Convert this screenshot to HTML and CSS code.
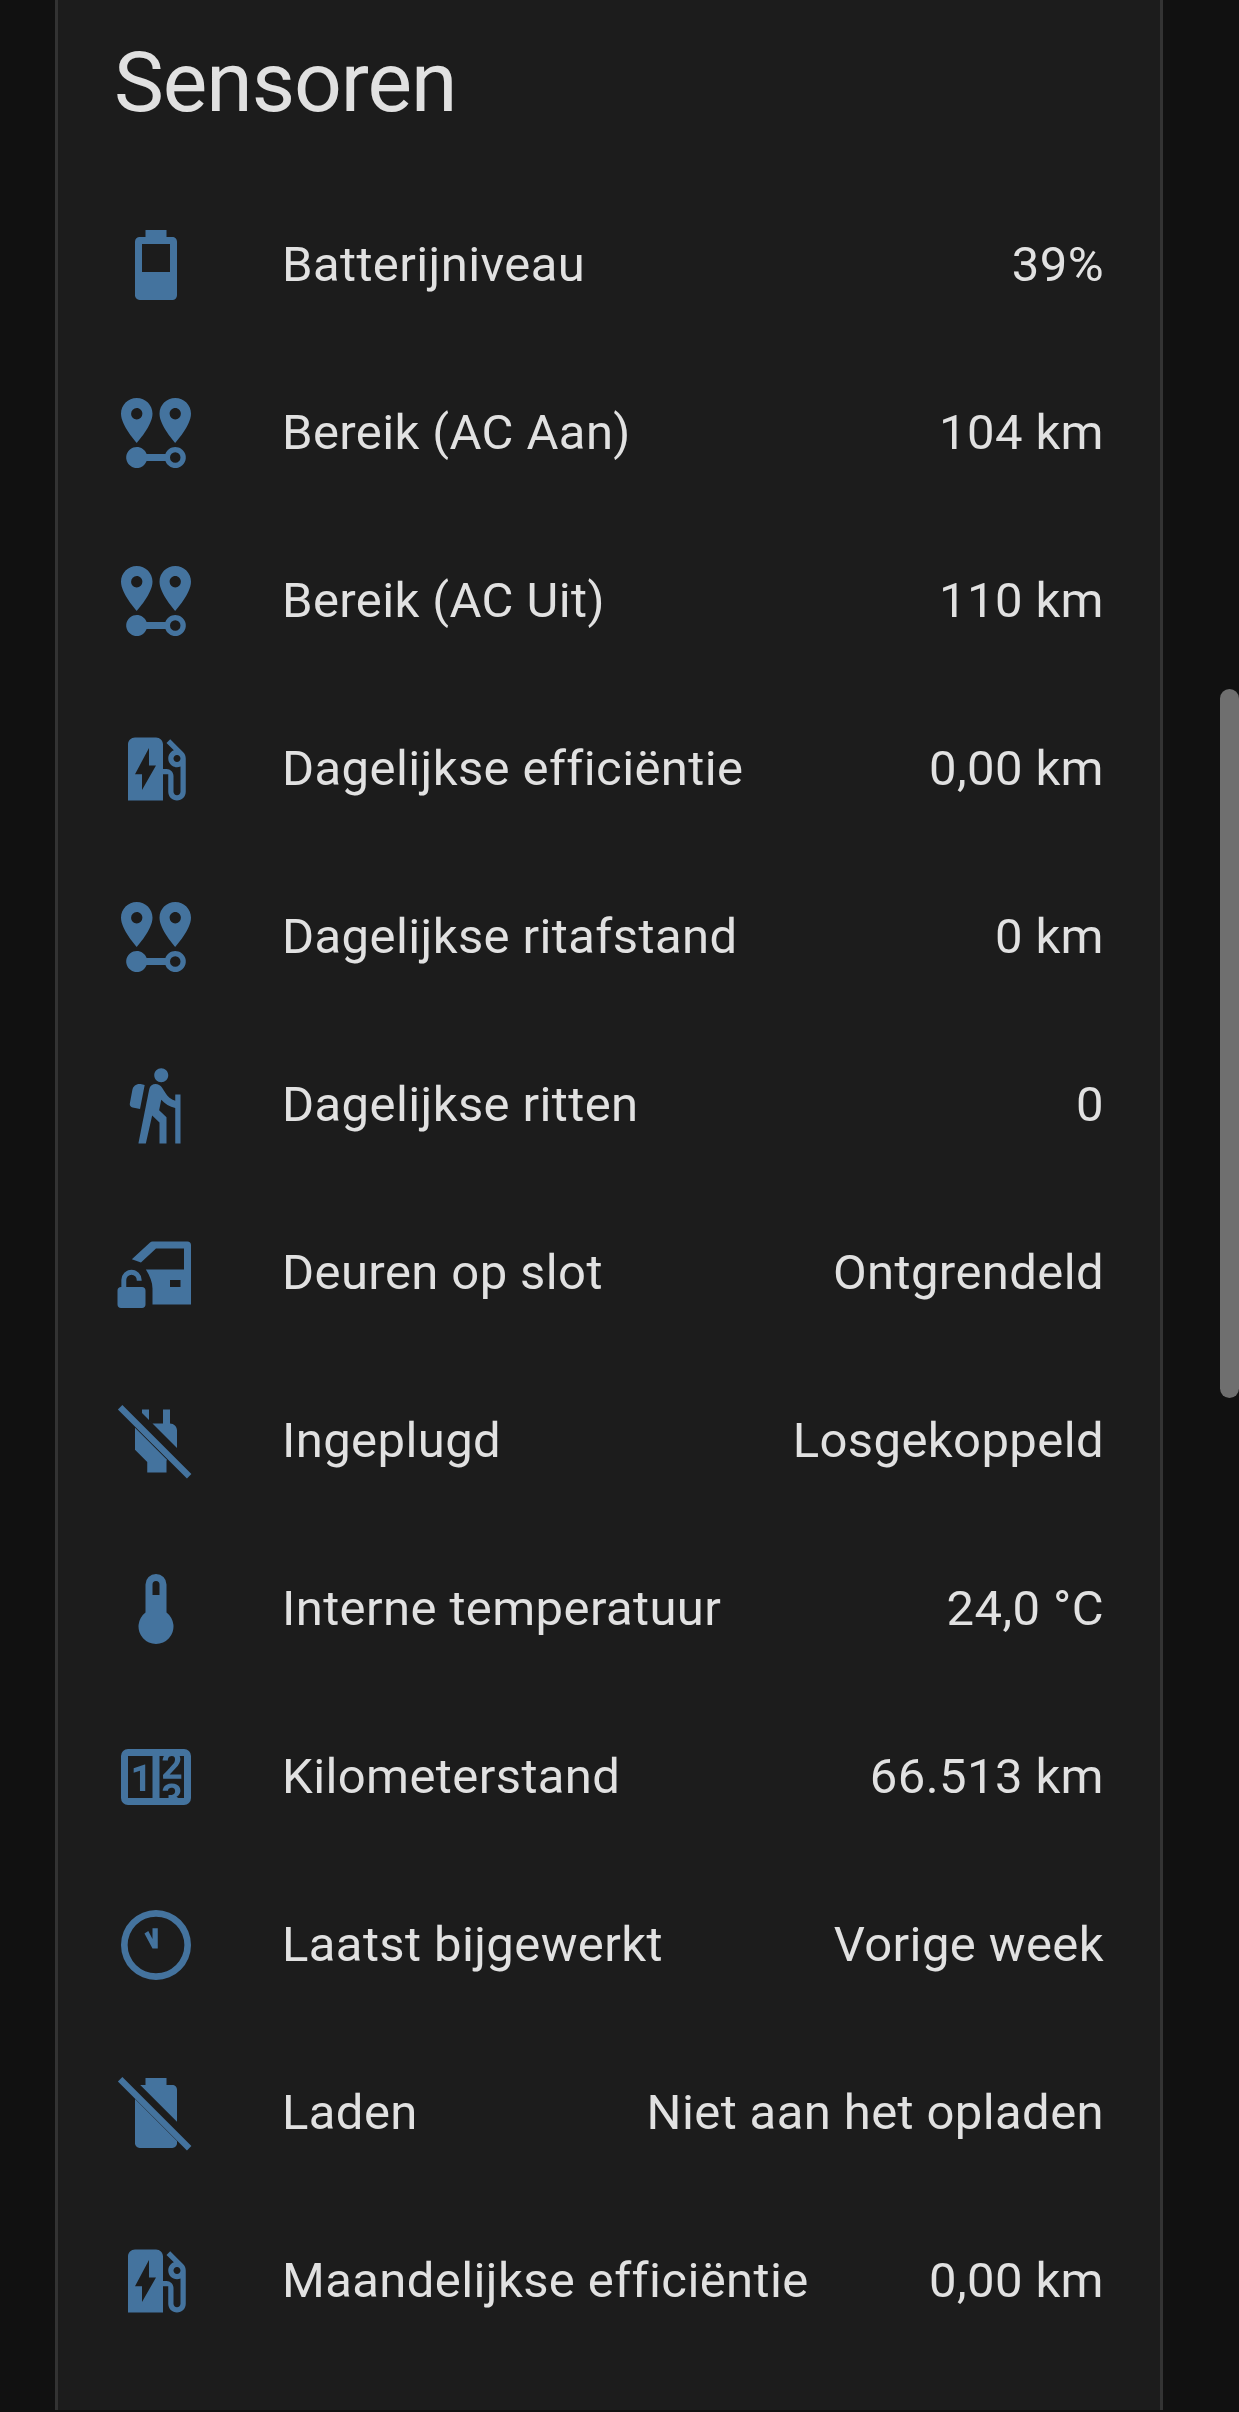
FILE: index.html
```html
<!DOCTYPE html>
<html lang="nl">
<head>
<meta charset="utf-8">
<title>Sensoren</title>
<link rel="stylesheet" href="styles.css">
</head>
<body>
<svg class="defs" width="0" height="0" aria-hidden="true">
  <defs>
    <symbol id="i-dist" viewBox="0 0 24 24"><path d="M6.5,8.11C5.61,8.11 4.89,7.39 4.89,6.5A1.61,1.61 0 0,1 6.5,4.89C7.39,4.89 8.11,5.61 8.11,6.5V6.5A1.61,1.61 0 0,1 6.5,8.11M6.5,2C4,2 2,4 2,6.5C2,9.87 6.5,14.86 6.5,14.86C6.5,14.86 11,9.87 11,6.5C11,4 9,2 6.5,2M17.5,8.11A1.61,1.61 0 0,1 15.89,6.5C15.89,5.61 16.61,4.89 17.5,4.89C18.39,4.89 19.11,5.61 19.11,6.5V6.5A1.61,1.61 0 0,1 17.5,8.11M17.5,2C15,2 13,4 13,6.5C13,9.87 17.5,14.86 17.5,14.86C17.5,14.86 22,9.87 22,6.5C22,4 20,2 17.5,2M17.5,16C16.23,16 15.1,16.8 14.68,18H9.32C8.77,16.44 7.05,15.62 5.5,16.17C3.93,16.72 3.11,18.44 3.66,20C4.22,21.56 5.93,22.38 7.5,21.83C8.35,21.53 9,20.85 9.32,20H14.69C15.24,21.56 16.96,22.38 18.5,21.83C20.08,21.28 20.9,19.56 20.35,18C19.92,16.8 18.78,16 17.5,16V16M17.5,20.5A1.5,1.5 0 0,1 16,19A1.5,1.5 0 0,1 17.5,17.5A1.5,1.5 0 0,1 19,19A1.5,1.5 0 0,1 17.5,20.5Z"/></symbol>
    <symbol id="i-ev" viewBox="0 0 24 24"><path d="M19.77 7.23l.01-.01-3.72-3.72L15 4.56l2.11 2.11c-.94.36-1.61 1.26-1.61 2.33 0 1.38 1.12 2.5 2.5 2.5.36 0 .69-.08 1-.21v7.21c0 .55-.45 1-1 1s-1-.45-1-1V14c0-1.1-.9-2-2-2h-1V5c0-1.1-.9-2-2-2H6c-1.1 0-2 .9-2 2v16h10v-7.5h1.5v5c0 1.38 1.12 2.5 2.5 2.5s2.5-1.12 2.5-2.5V9c0-.69-.28-1.32-.73-1.77zM18 10c-.55 0-1-.45-1-1s.45-1 1-1 1 .45 1 1-.45 1-1 1zM8 18v-4.5H6L10 6v5h2l-4 7z"/></symbol>
  </defs>
</svg>
<main class="card">
  <h1 class="title">Sensoren</h1>
  <div class="rows">
    <div class="row">
      <svg class="icon" viewBox="0 0 24 24"><path d="M16,14H8V6H16M16.67,4H15V2H9V4H7.33A1.33,1.33 0 0,0 6,5.33V20.67C6,21.4 6.6,22 7.33,22H16.67A1.33,1.33 0 0,0 18,20.67V5.33C18,4.6 17.4,4 16.67,4Z"/></svg>
      <span class="name">Batterijniveau</span><span class="state">39%</span>
    </div>
    <div class="row">
      <svg class="icon"><use href="#i-dist"/></svg>
      <span class="name">Bereik (AC Aan)</span><span class="state">104 km</span>
    </div>
    <div class="row">
      <svg class="icon"><use href="#i-dist"/></svg>
      <span class="name">Bereik (AC Uit)</span><span class="state">110 km</span>
    </div>
    <div class="row">
      <svg class="icon"><use href="#i-ev"/></svg>
      <span class="name">Dagelijkse efficiëntie</span><span class="state">0,00 km</span>
    </div>
    <div class="row">
      <svg class="icon"><use href="#i-dist"/></svg>
      <span class="name">Dagelijkse ritafstand</span><span class="state">0 km</span>
    </div>
    <div class="row">
      <svg class="icon" viewBox="0 0 24 24"><path d="M13.5 5.5c1.1 0 2-.9 2-2s-.9-2-2-2-2 .9-2 2 .9 2 2 2zM17.5 10.78c-1.23-.37-2.22-1.17-2.8-2.18l-1-1.6c-.41-.65-1.11-1-1.84-1-.78 0-1.59.5-1.78 1.44S7 23 7 23h2.1l1.8-8 2.1 2v6h2v-7.5l-2.1-2 .6-3c1 1.15 2.41 2.01 4 2.34V23H19V9h-1.5v1.78zM7.43 13.13l-2.12-.41c-.54-.11-.9-.63-.79-1.17L5.27 7.6c.21-1.08 1.26-1.79 2.34-1.58l1.16.23-1.34 6.88z"/></svg>
      <span class="name">Dagelijkse ritten</span><span class="state">0</span>
    </div>
    <div class="row">
      <svg class="icon" viewBox="0 0 24 24"><path fill-rule="evenodd" d="M11 3H21C21.6 3 22 3.4 22 4V21H11V16.4C11 14.6 10.2 12.8 9.1 11H20V5H12L7.7 9L5.1 8.1L10.3 3.3C10.5 3.1 10.7 3 11 3ZM16 14V16H19V14Z"/><path d="M5 11.1A2.9 2.9 0 0 0 2.1 14V16H2C1.4 16 1 16.4 1 17V21C1 21.6 1.4 22 2 22H8C8.6 22 9 21.6 9 21V17C9 16.4 8.6 16 8 16H3.5V14A1.5 1.5 0 0 1 6.5 14V14.2H7.9V14A2.9 2.9 0 0 0 5 11.1Z"/></svg>
      <span class="name">Deuren op slot</span><span class="state">Ontgrendeld</span>
    </div>
    <div class="row">
      <svg class="icon" viewBox="0 0 24 24"><path d="M2.39 1.73L1.11 3L20.84 22.73L22.11 21.46Z"/><path d="M8 3H10V6L11 7H14V3H16V7C17.1 7 18 7.9 18 9V14L8 4Z"/><path d="M6 8.2L15.2 17.4L15 17.6V21H9.5V18L6 14.5Z"/></svg>
      <span class="name">Ingeplugd</span><span class="state">Losgekoppeld</span>
    </div>
    <div class="row">
      <svg class="icon" viewBox="0 0 24 24"><path d="M15 13V5A3 3 0 0 0 9 5V13A5 5 0 1 0 15 13M12 4A1 1 0 0 1 13 5V8H11V5A1 1 0 0 1 12 4Z"/></svg>
      <span class="name">Interne temperatuur</span><span class="state">24,0 °C</span>
    </div>
    <div class="row">
      <svg class="icon" viewBox="0 0 24 24"><path d="M4,4H20A2,2 0 0,1 22,6V18A2,2 0 0,1 20,20H4A2,2 0 0,1 2,18V6A2,2 0 0,1 4,4M4,6V18H11V6H4M20,18V6H18.76C19,6.54 18.95,7.07 18.95,7.13C18.88,7.8 18.41,8.5 18.24,8.75L15.91,11.3L19.23,11.28L19.24,12.5L14.04,12.47L14,11.47C14,11.47 17.05,8.24 17.2,7.95C17.34,7.67 17.91,6 16.5,6C15.27,6.05 15.41,7.3 15.41,7.3L13.87,7.31C13.87,7.31 13.88,6.65 14.25,6H13V18H15.58L15.57,17.14L16.54,17.13C16.54,17.13 17.45,16.97 17.46,16.08C17.5,15.08 16.65,15.08 16.5,15.08C16.37,15.08 15.43,15.13 15.43,15.95H13.91C13.91,15.95 13.95,13.89 16.5,13.89C19.1,13.89 18.96,15.91 18.96,15.91C18.96,15.91 19,17.16 17.85,17.63L18.37,18H20M8.92,16H7.42V10.2L5.62,10.76V9.53L8.76,8.41H8.92V16Z"/></svg>
      <span class="name">Kilometerstand</span><span class="state">66.513 km</span>
    </div>
    <div class="row">
      <svg class="icon" viewBox="0 0 24 24"><path fill-rule="evenodd" d="M12 2A10 10 0 1 0 12 22A10 10 0 1 0 12 2ZM12 3.9A8.1 8.1 0 1 1 12 20.1A8.1 8.1 0 1 1 12 3.9Z"/><path d="M12.5 7.2V13H11L8.7 8.7L9.8 8L11 10.3V7.2Z"/></svg>
      <span class="name">Laatst bijgewerkt</span><span class="state">Vorige week</span>
    </div>
    <div class="row">
      <svg class="icon" viewBox="0 0 24 24"><path d="M2.39 1.73L1.11 3L20.84 22.73L22.11 21.46Z"/><path d="M7.5 4H9V2H15V4H16.67C17.4 4 18 4.6 18 5.33V14.5Z"/><path d="M6 8L18 20V20.67C18 21.4 17.4 22 16.67 22H7.33C6.6 22 6 21.4 6 20.67Z"/></svg>
      <span class="name">Laden</span><span class="state">Niet aan het opladen</span>
    </div>
    <div class="row">
      <svg class="icon"><use href="#i-ev"/></svg>
      <span class="name">Maandelijkse efficiëntie</span><span class="state">0,00 km</span>
    </div>
  </div>
</main>
<div class="scrollbar" aria-hidden="true"></div>
</body>
</html>
```
FILE: styles.css
```css
* { box-sizing: border-box; }
html, body { margin: 0; padding: 0; }
body {
  width: 1239px;
  height: 2412px;
  overflow: hidden;
  background: #111111;
  color: #e1e1e1;
  font-family: Roboto, "Noto Sans", sans-serif;
  padding-left: 55px;
  position: relative;
}
.defs { position: absolute; }
.card {
  width: 1108px;
  height: 2410px;
  background: #1c1c1c;
  border-left: 3px solid #333333;
  border-right: 3px solid #333333;
  padding: 0 56px 0 56px;
}
.title {
  margin: 0;
  height: 180px;
  padding-top: 27px;
  font-size: 84px;
  line-height: 112px;
  font-weight: 400;
  letter-spacing: -1.05px;
}
.row {
  display: flex;
  align-items: center;
  height: 168px;
  font-size: 49px;
  letter-spacing: 0.4px;
}
.icon {
  width: 84px;
  height: 84px;
  flex: none;
  fill: #44739e;
  margin: 2px 84px 0 0;
}
.name { flex: 1; white-space: nowrap; }
.state { white-space: nowrap; }
.scrollbar {
  position: absolute;
  left: 1220px;
  top: 689px;
  width: 19px;
  height: 709px;
  border-radius: 10px;
  background: #6f6f6f;
}
```
